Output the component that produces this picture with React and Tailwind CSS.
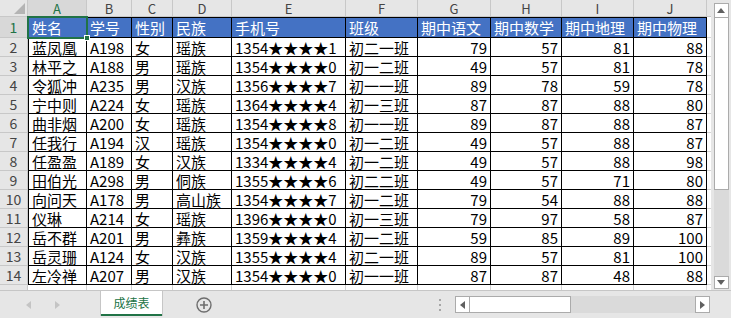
import React from "react";

const cols = [
  { letter: "A", w: "w-[59px] border-l", num: false },
  { letter: "B", w: "w-[45px]", num: false },
  { letter: "C", w: "w-[41px]", num: false },
  { letter: "D", w: "w-[59px]", num: false },
  { letter: "E", w: "w-[114px]", num: false },
  { letter: "F", w: "w-[72px]", num: false },
  { letter: "G", w: "w-[73px]", num: true },
  { letter: "H", w: "w-[71px]", num: true },
  { letter: "I", w: "w-[72px]", num: true },
  { letter: "J", w: "w-[73px]", num: true },
];

const headerWidths = [
  "w-[59px]",
  "w-[45px]",
  "w-[41px]",
  "w-[59px]",
  "w-[114px]",
  "w-[72px]",
  "w-[73px]",
  "w-[71px]",
  "w-[72px]",
  "w-[73px]",
];

const titles = ["姓名", "学号", "性别", "民族", "手机号", "班级", "期中语文", "期中数学", "期中地理", "期中物理"];

const rows = [
  ["蓝凤凰", "A198", "女", "瑶族", "1354★★★★1", "初二一班", 79, 57, 81, 88],
  ["林平之", "A188", "男", "瑶族", "1354★★★★0", "初一二班", 49, 57, 81, 78],
  ["令狐冲", "A235", "男", "汉族", "1356★★★★7", "初一一班", 89, 78, 59, 78],
  ["宁中则", "A224", "女", "瑶族", "1364★★★★4", "初一三班", 87, 87, 88, 80],
  ["曲非烟", "A200", "女", "瑶族", "1354★★★★8", "初一一班", 89, 87, 88, 87],
  ["任我行", "A194", "汉", "瑶族", "1354★★★★0", "初一二班", 49, 57, 88, 87],
  ["任盈盈", "A189", "女", "汉族", "1334★★★★4", "初一二班", 49, 57, 88, 98],
  ["田伯光", "A298", "男", "侗族", "1355★★★★6", "初二二班", 49, 57, 71, 80],
  ["向问天", "A178", "男", "高山族", "1354★★★★7", "初一二班", 79, 54, 88, 88],
  ["仪琳", "A214", "女", "瑶族", "1396★★★★0", "初一三班", 79, 97, 58, 87],
  ["岳不群", "A201", "男", "彝族", "1359★★★★4", "初一二班", 59, 85, 89, 100],
  ["岳灵珊", "A124", "女", "汉族", "1355★★★★4", "初二一班", 89, 57, 81, 100],
  ["左冷禅", "A207", "男", "汉族", "1354★★★★0", "初一一班", 87, 87, 48, 88],
];

function RowHead({ n, active }) {
  return (
    <div
      className={`w-[28px] shrink-0 border-r border-b border-[#c8c8c8] flex items-center justify-center text-[14px] leading-none ${
        active ? "bg-[#d8d8d8] text-[#217346]" : "bg-[#e6e6e6] text-[#444]"
      }`}
    >
      {n}
    </div>
  );
}

function Tri({ dir, color }) {
  return (
    <svg width="5" height="8" viewBox="0 0 5 8">
      {dir === "left" ? (
        <path d="M5 0 L0 4 L5 8 Z" fill={color} />
      ) : (
        <path d="M0 0 L5 4 L0 8 Z" fill={color} />
      )}
    </svg>
  );
}

export default function App() {
  return (
    <div
      className="w-[731px] h-[318px] overflow-hidden bg-white flex flex-col text-black"
      style={{ fontFamily: '"Noto Sans CJK SC", "Liberation Sans", sans-serif' }}
    >
      <div className="flex h-[290px]">
        {/* sheet grid */}
        <div className="relative w-[711px] flex flex-col">
          {/* column letters */}
          <div className="flex h-[17px] text-[13px] leading-none">
            <div className="w-[28px] shrink-0 border-r border-b border-[#c8c8c8] bg-[#e6e6e6] flex items-end justify-end p-[2px]">
              <svg width="11" height="11" viewBox="0 0 11 11">
                <path d="M11 0 L11 11 L0 11 Z" fill="#b4b4b4" />
              </svg>
            </div>
            {cols.map((c, i) => (
              <div
                key={c.letter}
                className={`${headerWidths[i]} shrink-0 border-r border-b border-[#c8c8c8] flex items-center justify-center ${
                  i === 0 ? "bg-[#d8d8d8] text-[#217346]" : "bg-[#e6e6e6] text-[#444]"
                }`}
              >
                {c.letter}
              </div>
            ))}
            <div className="flex-1 border-b border-[#c8c8c8] bg-[#e6e6e6]" />
          </div>

          {/* title row */}
          <div className="flex h-[21px] text-[15px]">
            <RowHead n={1} active />
            {cols.map((c, i) => (
              <div
                key={c.letter}
                className={`${c.w} shrink-0 border-r border-y border-black bg-[#4472c4] text-white px-[3px] flex items-center leading-none whitespace-nowrap`}
              >
                {titles[i]}
              </div>
            ))}
            <div className="flex-1 border-b border-[#d4d4d4]" />
          </div>

          {/* data rows */}
          {rows.map((r, ri) => (
            <div key={ri} className="flex h-[19px] text-[15px]">
              <RowHead n={ri + 2} />
              {cols.map((c, i) => (
                <div
                  key={c.letter}
                  className={`${c.w} ${
                    c.num ? "justify-end" : "justify-start"
                  } shrink-0 border-r border-b border-black px-[3px] flex items-center leading-none whitespace-nowrap`}
                >
                  {r[i]}
                </div>
              ))}
              <div className="flex-1 border-b border-[#d4d4d4]" />
            </div>
          ))}

          {/* partial row 15 */}
          <div className="flex h-[5px]">
            <div className="w-[28px] shrink-0 border-r border-[#c8c8c8] bg-[#e6e6e6]" />
            {headerWidths.map((w, i) => (
              <div key={i} className={`${w} shrink-0 border-r border-[#d4d4d4]`} />
            ))}
            <div className="flex-1" />
          </div>

          {/* active cell selection */}
          <div className="absolute left-[27px] top-[16px] w-[61px] h-[23px] border-2 border-[#217346]" />
          <div className="absolute left-[84px] top-[35px] w-[6px] h-[6px] bg-[#217346] border border-white" />
        </div>

        {/* vertical scrollbar */}
        <div className="w-[20px] bg-[#e6e6e6] flex flex-col items-center pt-[3px] pb-px">
          <div className="w-[15px] h-[15px] bg-white border border-[#ababab] flex items-center justify-center">
            <svg width="8" height="5" viewBox="0 0 8 5">
              <path d="M0 5 L4 0 L8 5 Z" fill="#606060" />
            </svg>
          </div>
          <div className="w-[15px] h-[172px] bg-white border border-[#ababab] border-t-0" />
          <div className="w-[15px] flex-1 bg-[#dadada]" />
          <div className="w-[15px] h-[13px] bg-white border border-[#ababab] flex items-center justify-center">
            <svg width="8" height="5" viewBox="0 0 8 5">
              <path d="M0 0 L8 0 L4 5 Z" fill="#606060" />
            </svg>
          </div>
        </div>
      </div>

      {/* sheet tabs bar */}
      <div className="h-[28px] border-t border-[#c6c6c6] bg-[#e6e6e6] flex items-start">
        <div className="w-[100px] h-[27px] flex items-center gap-[24px] pl-[26px]">
          <Tri dir="left" color="#c4c4c4" />
          <Tri dir="right" color="#c4c4c4" />
        </div>
        <div className="w-[63px] h-[25px] bg-white border-x border-[#c6c6c6] flex flex-col">
          <div className="flex-1 flex items-center justify-center text-[12px] leading-none text-[#217346]">成绩表</div>
          <div className="h-[2px] bg-[#217346]" />
        </div>
        <div className="w-[60px] h-[27px] flex items-center pl-[33px]">
          <svg width="16" height="16" viewBox="0 0 16 16">
            <circle cx="8" cy="8" r="7" fill="none" stroke="#6e6e6e" strokeWidth="1.4" />
            <path d="M8 4 V12 M4 8 H12" stroke="#6e6e6e" strokeWidth="1.6" />
          </svg>
        </div>
        <div className="flex-1" />
        <div className="h-[27px] flex flex-col justify-center gap-[3px] mr-[14px]">
          <div className="w-[2px] h-[2px] bg-[#a6a6a6]" />
          <div className="w-[2px] h-[2px] bg-[#a6a6a6]" />
          <div className="w-[2px] h-[2px] bg-[#a6a6a6]" />
        </div>
        <div className="mt-[5px] w-[255px] h-[17px] flex mr-[21px]">
          <div className="w-[15px] h-full bg-white border border-[#ababab] flex items-center justify-center">
            <Tri dir="left" color="#606060" />
          </div>
          <div className="w-[101px] h-full bg-white border border-[#ababab] border-l-0" />
          <div className="flex-1 bg-[#dadada]" />
          <div className="w-[15px] h-full bg-white border border-[#ababab] flex items-center justify-center">
            <Tri dir="right" color="#606060" />
          </div>
        </div>
      </div>
    </div>
  );
}
